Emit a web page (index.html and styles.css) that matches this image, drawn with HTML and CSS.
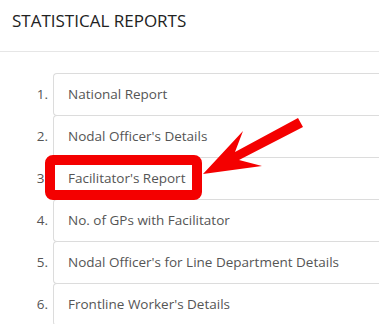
FILE: index.html
```html
<!DOCTYPE html>
<html>
<head>
  <meta charset="UTF-8">
  <title>Statistical Reports</title>
  <link rel="stylesheet" href="styles.css">
</head>
<body>
  <div class="panel">
    <h2 class="panel-title">STATISTICAL REPORTS</h2>
    <div class="panel-body">
      <ol class="reports">
        <li><span class="num">1.</span><a class="item">National Report</a></li>
        <li><span class="num">2.</span><a class="item">Nodal Officer's Details</a></li>
        <li><span class="num">3.</span><a class="item">Facilitator's Report</a></li>
        <li><span class="num">4.</span><a class="item">No. of GPs with Facilitator</a></li>
        <li><span class="num">5.</span><a class="item">Nodal Officer's for Line Department Details</a></li>
        <li><span class="num">6.</span><a class="item">Frontline Worker's Details</a></li>
      </ol>

      <!-- annotation -->
      <div class="mark"></div>
      <svg class="arrow" width="379" height="324" viewBox="0 0 379 324">
        <polygon fill="#f40000" points="203,174 243,131 235,152 298,118 303,127 239,160 262,166"/>
      </svg>
    </div>
  </div>
</body>
</html>
```

FILE: styles.css
```css
body { margin: 0; background: #fff; font-family: "Open Sans", "DejaVu Sans", sans-serif; }
.panel { position: relative; }
.panel-title {
  margin: 0; height: 52px; padding: 0 12px; box-sizing: border-box;
  font-size: 17px; font-weight: 400; color: #222; line-height: 42px;
  border-bottom: 1px solid #e6e6e6;
}
.panel-body { padding-top: 21px; }
.reports { list-style: none; margin: 0; padding: 0; }
.reports li { display: flex; align-items: center; height: 42px; }
.num { width: 53px; text-align: right; padding-right: 5px; box-sizing: border-box; font-size: 13.5px; color: #555; }
.item {
  flex: 1; height: 43px; margin-bottom: -1px; box-sizing: border-box;
  display: flex; align-items: center; padding-left: 14px; padding-bottom: 1px;
  border: 1px solid #dcdcdc; border-right: none; border-radius: 4px 0 0 4px;
  font-size: 13.5px; color: #555; background: #fff;
}
.mark {
  position: absolute; left: 45px; top: 155px; width: 157px; height: 45px;
  box-sizing: border-box; border: 10px solid #f40000; border-radius: 8px;
}
.arrow { position: absolute; left: 0; top: 0; }
```
